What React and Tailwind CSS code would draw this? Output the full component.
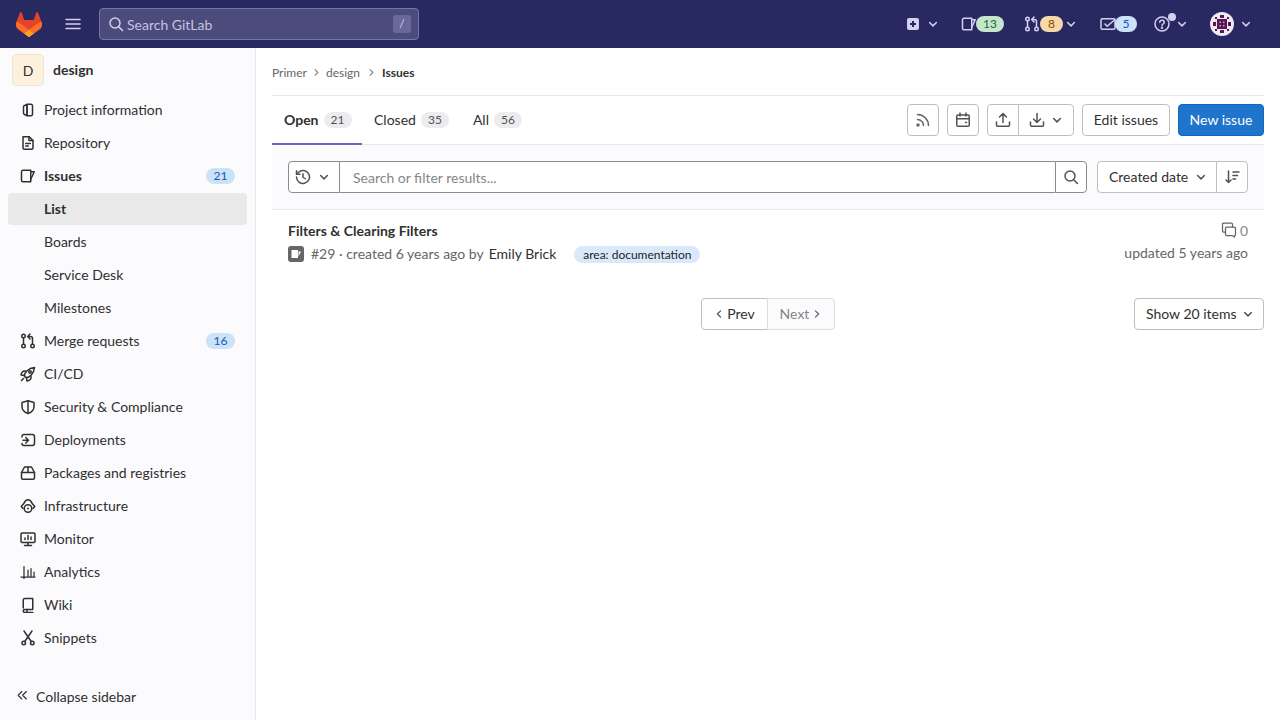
import React from "react";

// Iconos dibujados a mano sobre una grilla de 16x16
function Icon({ size = 16, className = "", children }) {
  return (
    <svg
      width={size}
      height={size}
      viewBox="0 0 16 16"
      fill="none"
      stroke="currentColor"
      strokeWidth="1.5"
      strokeLinecap="round"
      strokeLinejoin="round"
      className={"shrink-0 " + className}
    >
      {children}
    </svg>
  );
}

const Chevron = ({ className = "" }) => (
  <Icon size={12} className={className}>
    <path d="M3.5 6l4.5 4.5L12.5 6" strokeWidth="2" />
  </Icon>
);

const IssuesGlyph = () => (
  <>
    <path d="M3 2.25h7.75v11.5H3A1.5 1.5 0 0 1 1.5 12.25v-8.5A1.5 1.5 0 0 1 3 2.25z" />
    <path d="M10.75 3.75h3.5l-3.5 7.5" />
  </>
);

const MergeGlyph = () => (
  <>
    <circle cx="3.5" cy="3" r="1.75" />
    <circle cx="3.5" cy="13" r="1.75" />
    <circle cx="12.5" cy="13" r="1.75" />
    <path d="M3.5 4.75v6.5M12.5 11.25V5.5a2 2 0 0 0-2-2H8" />
    <path d="M10 1L7.75 3.5 10 6" />
  </>
);

const navIcons = {
  info: (
    <>
      <path d="M7 2.5L4.5 3.5a1.5 1.5 0 0 0-1 1.4v6.2a1.5 1.5 0 0 0 1 1.4L7 13.5z" />
      <path d="M7 2.25h4a1.5 1.5 0 0 1 1.5 1.5v8.5a1.5 1.5 0 0 1-1.5 1.5H7z" />
    </>
  ),
  repo: (
    <>
      <path d="M3 1.75h6.25L13 5.5v7.25a1.5 1.5 0 0 1-1.5 1.5h-7A1.5 1.5 0 0 1 3 12.75z" />
      <path d="M9 2v3.5h4M5.75 8.5h4.5M5.75 11h2.5" />
    </>
  ),
  issues: <IssuesGlyph />,
  merge: <MergeGlyph />,
  rocket: (
    <>
      <path d="M4.5 10.5C4 6.5 8.5 2 14.5 1.5 14 7.5 9.5 12 5.5 11.5z" />
      <path d="M5.5 5C3 4.5 1.5 6.5 1 9l3.5.5M11 10.5c.5 2.5-1.5 4-4 4.5l-.5-3.5" />
      <path d="M3.5 12.5L1.5 14.5" />
      <circle cx="10" cy="6" r="1.25" />
    </>
  ),
  shield: (
    <>
      <path d="M8 1.75L14 3.5v4c0 3.5-2.5 5.8-6 7-3.5-1.2-6-3.5-6-7v-4z" />
      <path d="M8 2v12" />
    </>
  ),
  deploy: (
    <>
      <path d="M2 5V4.5a2 2 0 0 1 2-2h8.5a2 2 0 0 1 2 2v7a2 2 0 0 1-2 2H4a2 2 0 0 1-2-2" />
      <path d="M3 8.25h5M5.75 5.5L8.5 8.25 5.75 11" />
    </>
  ),
  box: (
    <>
      <path d="M4.5 2h7l3 5.5v5.25a1.5 1.5 0 0 1-1.5 1.5H3a1.5 1.5 0 0 1-1.5-1.5V7.5z" />
      <path d="M1.5 7.5h13M8 2v5.5" />
    </>
  ),
  cloud: (
    <>
      <path d="M3 10.5L1.2 8.5 4 5.2C5 2.8 6.5 1.75 8 1.75s3 1 4 3.45l2.8 3.3-1.8 2" />
      <circle cx="8" cy="10.5" r="3.75" />
      <circle cx="8" cy="10.5" r="1" fill="currentColor" stroke="none" />
    </>
  ),
  monitor: (
    <>
      <rect x="1" y="2" width="14" height="9.5" rx="1" />
      <path d="M4.5 14.5h7M8 11.5v3M5 8.5V7M8 8.5V4.5M11 8.5V6" />
    </>
  ),
  chart: <path d="M1 13h14M4 14.5V2.5M8 13V6M11 13V4.5M14 13V8" strokeWidth="1.25" />,
  wiki: (
    <>
      <path d="M3.25 11V3a1.5 1.5 0 0 1 1.5-1.5h8v11H4.75a1.5 1.5 0 0 0 0 3h8" />
      <path d="M7 12.5v3" />
    </>
  ),
  snippet: (
    <>
      <circle cx="3.75" cy="13" r="1.75" />
      <circle cx="12.25" cy="13" r="1.75" />
      <path d="M4.75 11.5L12 1M11.25 11.5L4 1" />
    </>
  ),
};

const navItems = [
  { label: "Project information", icon: "info" },
  { label: "Repository", icon: "repo" },
  { label: "Issues", icon: "issues", count: 21, bold: true },
  { label: "List", active: true },
  { label: "Boards" },
  { label: "Service Desk" },
  { label: "Milestones" },
  { label: "Merge requests", icon: "merge", count: 16 },
  { label: "CI/CD", icon: "rocket" },
  { label: "Security & Compliance", icon: "shield" },
  { label: "Deployments", icon: "deploy" },
  { label: "Packages and registries", icon: "box" },
  { label: "Infrastructure", icon: "cloud" },
  { label: "Monitor", icon: "monitor" },
  { label: "Analytics", icon: "chart" },
  { label: "Wiki", icon: "wiki" },
  { label: "Snippets", icon: "snippet" },
];

function TanukiLogo() {
  return (
    <svg width="26" height="25" viewBox="0 0 25 24" className="shrink-0">
      <path fill="#E24329" d="m24.507 9.5-.034-.09L21.082.562a.896.896 0 0 0-1.694.091l-2.29 7.01H7.825L5.535.653a.898.898 0 0 0-1.694-.09L.451 9.411.416 9.5a6.297 6.297 0 0 0 2.09 7.278l.012.01.03.022 5.16 3.867 2.56 1.935 1.554 1.176a1.051 1.051 0 0 0 1.268 0l1.555-1.176 2.56-1.935 5.197-3.89.014-.01A6.297 6.297 0 0 0 24.507 9.5Z" />
      <path fill="#FC6D26" d="m24.507 9.5-.034-.09a11.44 11.44 0 0 0-4.56 2.051l-7.447 5.632 4.742 3.584 5.197-3.89.014-.01A6.297 6.297 0 0 0 24.507 9.5Z" />
      <path fill="#FCA326" d="m7.707 20.677 2.56 1.935 1.555 1.176a1.051 1.051 0 0 0 1.268 0l1.555-1.176 2.56-1.935-4.743-3.584-4.755 3.584Z" />
      <path fill="#FC6D26" d="M5.01 11.461a11.43 11.43 0 0 0-4.56-2.05L.416 9.5a6.297 6.297 0 0 0 2.09 7.278l.012.01.03.022 5.16 3.867 4.745-3.584-7.444-5.632Z" />
    </svg>
  );
}

function UserAvatar() {
  return (
    <svg width="24" height="24" viewBox="0 0 24 24" className="shrink-0">
      <circle cx="12" cy="12" r="12" fill="#f0e9f0" />
      <g fill="#5a1458">
        <rect x="7" y="7" width="10" height="10" />
        <rect x="10" y="3" width="4" height="3" />
        <rect x="10" y="18" width="4" height="3" />
        <rect x="3" y="10" width="3" height="4" />
        <rect x="18" y="10" width="3" height="4" />
        <rect x="5" y="5" width="2" height="2" />
        <rect x="17" y="5" width="2" height="2" />
        <rect x="5" y="17" width="2" height="2" />
        <rect x="17" y="17" width="2" height="2" />
      </g>
      <g fill="#c9a9c9">
        <rect x="9.5" y="9.5" width="1.5" height="1.5" />
        <rect x="13" y="9.5" width="1.5" height="1.5" />
        <rect x="9.5" y="13" width="1.5" height="1.5" />
        <rect x="13" y="13" width="1.5" height="1.5" />
      </g>
    </svg>
  );
}

function TopBar() {
  return (
    <header className="h-12 bg-[#292961] flex items-center text-[#d1d0f0] shrink-0">
      <div className="ml-4">
        <TanukiLogo />
      </div>
      <button className="ml-[23px] text-[#d1d0f0]">
        <Icon>
          <path d="M1 3.5h14M1 8h14M1 12.5h14" />
        </Icon>
      </button>
      <div className="ml-[18px] w-[320px] h-8 rounded-[4px] bg-[#4b4b7c] border border-[#7575a8] flex items-center pl-2 pr-[7px]">
        <Icon className="text-[#d1d0f0]">
          <circle cx="7" cy="7" r="5" />
          <path d="M11 11l3.5 3.5" />
        </Icon>
        <span className="ml-[3px] text-[14px] text-[#c5c4e2]">Search GitLab</span>
        <span className="ml-auto w-[18px] h-[18px] rounded-[3px] bg-[#68689a] text-[#d1d0f0] text-[12px] flex items-center justify-center">
          /
        </span>
      </div>

      <div className="ml-auto flex items-center">
        <svg width="12" height="12" viewBox="0 0 12 12" className="shrink-0">
          <rect width="12" height="12" rx="2" fill="#d1d0f0" />
          <path d="M6 3v6M3 6h6" stroke="#292961" strokeWidth="2" />
        </svg>
        <Chevron className="ml-[8px]" />
        <span className="ml-[22px] text-[#d1d0f0]">
          <Icon>
            <IssuesGlyph />
          </Icon>
        </span>
        <span className="-ml-[1px] w-[28px] h-4 rounded-full bg-[#c3e6cd] text-[#24663b] text-[12px] leading-4 text-center">13</span>
        <span className="ml-[20px]">
          <Icon>
            <MergeGlyph />
          </Icon>
        </span>
        <span className="w-[23px] h-4 rounded-full bg-[#f5d9a8] text-[#8f4700] text-[12px] leading-4 text-center">8</span>
        <Chevron className="ml-[2px]" />
        <span className="ml-[23px]">
          <Icon>
            <rect x="1" y="2.75" width="14" height="10.5" rx="1.25" />
            <path d="M5 8l2.25 2.25L15 3.5" />
          </Icon>
        </span>
        <span className="-ml-[1px] w-[22px] h-4 rounded-full bg-[#cbe2f9] text-[#0b5cad] text-[12px] leading-4 text-center">5</span>
        <span className="ml-[17px] relative">
          <Icon>
            <circle cx="8" cy="8" r="7" />
            <path d="M5.75 6.25A2.25 2.25 0 0 1 8 4.25c1.25 0 2.25.9 2.25 2 0 1.75-2.25 1.75-2.25 3.25" />
            <circle cx="8" cy="11.75" r=".5" />
          </Icon>
          <span className="absolute -top-[3px] left-[14px] w-2 h-2 rounded-full bg-[#d1d0f0]" />
        </span>
        <Chevron className="ml-[6px]" />
        <span className="ml-[22px]">
          <UserAvatar />
        </span>
        <Chevron className="ml-[6px] mr-[28px]" />
      </div>
    </header>
  );
}

function Sidebar() {
  return (
    <aside className="w-64 shrink-0 bg-[#fbfafd] border-r border-[#e9e9e9] flex flex-col text-[#303030] text-[14px]">
      <div className="flex items-center h-[46px] pb-[2px] pl-3">
        <div className="w-8 h-8 rounded-[4px] bg-[#fdf1dd] border border-[#f3e5cd] text-[#303030] flex items-center justify-center text-[14px]">
          D
        </div>
        <span className="ml-[9px] pb-[2px] font-bold">design</span>
      </div>
      <nav className="flex flex-col pl-2 pr-2">
        {navItems.map((item) => (
          <div
            key={item.label}
            className={
              "h-8 mb-[1px] flex items-center pl-3 pr-3 rounded-[4px] " +
              (item.active ? "bg-[#e9e9e9] font-bold" : "") +
              (item.bold ? " font-bold" : "")
            }
          >
            <span className="w-6 shrink-0">
              {item.icon && <Icon>{navIcons[item.icon]}</Icon>}
            </span>
            <span className="pb-[2px]">{item.label}</span>
            {item.count && (
              <span className="ml-auto w-[29px] h-4 rounded-full bg-[#cbe2f9] text-[#0b5cad] text-[12px] leading-4 text-center font-normal">
                {item.count}
              </span>
            )}
          </div>
        ))}
      </nav>
      <div className="mt-auto h-12 flex items-center pl-[17px]">
        <Icon size={12}>
          <path d="M6.5 2L1.5 7l5 5M12.5 2l-5 5 5 5" strokeWidth="1.5" />
        </Icon>
        <span className="ml-[7px]">Collapse sidebar</span>
      </div>
    </aside>
  );
}

function Button({ className = "", children }) {
  return (
    <button
      className={
        "h-8 flex items-center justify-center bg-white border border-[#bfbfbf] rounded-[4px] text-[#303030] text-[14px] " +
        className
      }
    >
      {children}
    </button>
  );
}

function Tab({ label, count, active }) {
  return (
    <div
      className={
        "h-12 flex items-center border-b-2 -mb-[1px] " +
        (active ? "border-[#6666c4] font-bold pl-3 pr-3 w-[90px]" : "border-transparent ml-3")
      }
    >
      <span>{label}</span>
      <span className="ml-[5px] h-4 min-w-[28px] px-[6px] rounded-full bg-[#ececef] text-[#525252] text-[12px] leading-4 text-center font-normal">
        {count}
      </span>
    </div>
  );
}

function IssueList() {
  return (
    <div className="flex justify-between px-4 h-[88px] pt-[10px]">
      <div>
        <div className="font-bold h-[24px] leading-[22px]">Filters &amp; Clearing Filters</div>
        <div className="flex items-center h-[20px] text-[#666666]">
          <svg width="16" height="16" viewBox="0 0 16 16" className="shrink-0">
            <rect width="16" height="16" rx="3" fill="#666666" />
            <path d="M3.5 4h6.5v8H3.5zM10.5 5.5h2.5l-2.5 5z" fill="#fff" />
          </svg>
          <span className="ml-[7px] pb-[2px]">#29 · created 6 years ago by </span>
          <span className="ml-[5px] pb-[2px] text-[#303030]">Emily Brick</span>
          <span className="ml-[18px] w-[126px] text-center h-[17px] rounded-full bg-[#d9e8fa] text-[#1f1e24] text-[12px] leading-[17px]">
            area: documentation
          </span>
        </div>
      </div>
      <div className="flex flex-col items-end text-[#666666]">
        <div className="flex items-center h-[20px]">
          <Icon className="text-[#666666]">
            <path d="M4.5 10H2.5a1 1 0 0 1-1-1V2a1 1 0 0 1 1-1h8a1 1 0 0 1 1 1v3" strokeWidth="1.25" />
            <path d="M5.5 5h8a1 1 0 0 1 1 1v6.5a1 1 0 0 1-1 1v1.5L11 13.5H5.5a1 1 0 0 1-1-1V6a1 1 0 0 1 1-1z" strokeWidth="1.25" />
          </Icon>
          <span className="ml-[3px] text-[#868686]">0</span>
        </div>
        <div className="mt-[1px] h-[22px] leading-[24px]">updated 5 years ago</div>
      </div>
    </div>
  );
}

function Content() {
  return (
    <main className="flex-1 min-w-0 px-4 text-[14px] text-[#303030]">
      {/* Migas de pan */}
      <div className="h-12 flex items-center pt-[2px] border-b border-[#e9e9e9] text-[12px] text-[#666666]">
        <span>Primer</span>
        <Icon size={9} className="mx-[5px] text-[#868686]">
          <path d="M5.5 3l5 5-5 5" strokeWidth="2" />
        </Icon>
        <span>design</span>
        <Icon size={9} className="ml-[7px] mr-[6px] text-[#868686]">
          <path d="M5.5 3l5 5-5 5" strokeWidth="2" />
        </Icon>
        <span className="font-bold text-[#303030]">Issues</span>
      </div>

      {/* Tabs y acciones */}
      <div className="h-[49px] flex items-center justify-between border-b border-[#e9e9e9]">
        <div className="flex items-center">
          <Tab label="Open" count={21} active />
          <Tab label="Closed" count={35} />
          <div className="w-3" />
          <Tab label="All" count={56} />
        </div>
        <div className="flex items-center gap-2">
          <Button className="w-8 text-[#666666]">
            <Icon className="text-[#666666]">
              <circle cx="3" cy="13" r="1" />
              <path d="M2.5 7.5a6 6 0 0 1 6 6M2.5 2.5a11 11 0 0 1 11 11" />
            </Icon>
          </Button>
          <Button className="w-8">
            <Icon className="text-[#525252]">
              <rect x="1.75" y="3" width="12.5" height="11.25" rx="1.25" />
              <path d="M5 1v3M11 1v3M2 6.75h12M10.5 10.5h1" />
            </Icon>
          </Button>
          <div className="flex">
            <Button className="w-8 rounded-r-none">
              <Icon className="text-[#525252]">
                <path d="M8 10.5V1.5M4.5 5L8 1.5 11.5 5M1.5 10v3a1.25 1.25 0 0 0 1.25 1.25h10.5A1.25 1.25 0 0 0 14.5 13v-3" />
              </Icon>
            </Button>
            <Button className="w-[56px] -ml-[1px] rounded-l-none gap-[6px]">
              <Icon className="text-[#525252]">
                <path d="M8 1.5v9M4.5 7L8 10.5 11.5 7M1.5 10v3a1.25 1.25 0 0 0 1.25 1.25h10.5A1.25 1.25 0 0 0 14.5 13v-3" />
              </Icon>
              <Chevron className="text-[#525252]" />
            </Button>
          </div>
          <Button className="w-[88px] pb-[2px]">Edit issues</Button>
          <button className="w-[86px] h-8 pb-[2px] rounded-[4px] bg-[#1f75cb] border border-[#1068bf] text-white text-[14px]">
            New issue
          </button>
        </div>
      </div>

      {/* Barra de filtros */}
      <div className="h-[65px] bg-[#fbfafd] border-b border-[#e9e9e9] flex items-center px-4">
        <div className="flex flex-1">
          <div className="w-[52px] h-8 bg-white border border-[#8c8c8c] rounded-l-[4px] flex items-center pl-[6px] gap-[7px] text-[#525252]">
            <Icon>
              <path d="M1.5 8a6.5 6.5 0 1 0 2-4.7L1.5 5.2" />
              <path d="M1.5 1.75V5.25H5M8 4.75V8.25l2.25 1.5" />
            </Icon>
            <Chevron />
          </div>
          <div className="flex-1 h-8 bg-white border-y border-[#8c8c8c] flex items-center pl-[13px] text-[#868686]">
            Search or filter results...
          </div>
          <div className="w-8 h-8 bg-white border border-[#8c8c8c] rounded-r-[4px] flex items-center justify-center text-[#525252]">
            <Icon>
              <circle cx="7" cy="7" r="5" />
              <path d="M11 11l3.5 3.5" />
            </Icon>
          </div>
        </div>
        <div className="flex ml-[10px]">
          <Button className="w-[120px] justify-start pl-[11px] pb-[2px] rounded-r-none border-[#a8a8a8] gap-[7px]">
            Created date
            <Chevron className="text-[#525252] mt-[2px]" />
          </Button>
          <Button className="w-8 -ml-[1px] rounded-l-none border-[#a8a8a8]">
            <Icon className="text-[#525252]">
              <path d="M4.5 2v11.5M2 11l2.5 2.5L7 11M9 3h6M9 6.5h4.5M9 10h2.5" />
            </Icon>
          </Button>
        </div>
      </div>

      <IssueList />

      {/* Paginación */}
      <div className="grid grid-cols-[1fr_auto_1fr] items-center">
        <div />
        <div className="flex">
          <Button className="w-[67px] rounded-r-none gap-[3px]">
            <Icon size={10} className="text-[#525252]">
              <path d="M10.5 3l-5 5 5 5" strokeWidth="2" />
            </Icon>
            <span className="pb-[2px]">Prev</span>
          </Button>
          <button className="w-[68px] h-8 -ml-[1px] flex items-center justify-center gap-[3px] bg-[#fbfafd] border border-[#dcdcde] rounded-r-[4px] text-[#868686] text-[14px]">
            <span className="pb-[2px]">Next</span>
            <Icon size={10} className="text-[#666666]">
              <path d="M5.5 3l5 5-5 5" strokeWidth="2" />
            </Icon>
          </button>
        </div>
        <div className="flex justify-end">
          <Button className="w-[130px] justify-start pl-[11px] gap-[5px]">
            <span className="pb-[2px]">Show 20 items</span>
            <Chevron className="text-[#525252]" />
          </Button>
        </div>
      </div>
    </main>
  );
}

export default function App() {
  return (
    <div className="h-[720px] flex flex-col bg-white font-['Lato',sans-serif] overflow-hidden">
      <TopBar />
      <div className="flex flex-1 min-h-0">
        <Sidebar />
        <Content />
      </div>
    </div>
  );
}
